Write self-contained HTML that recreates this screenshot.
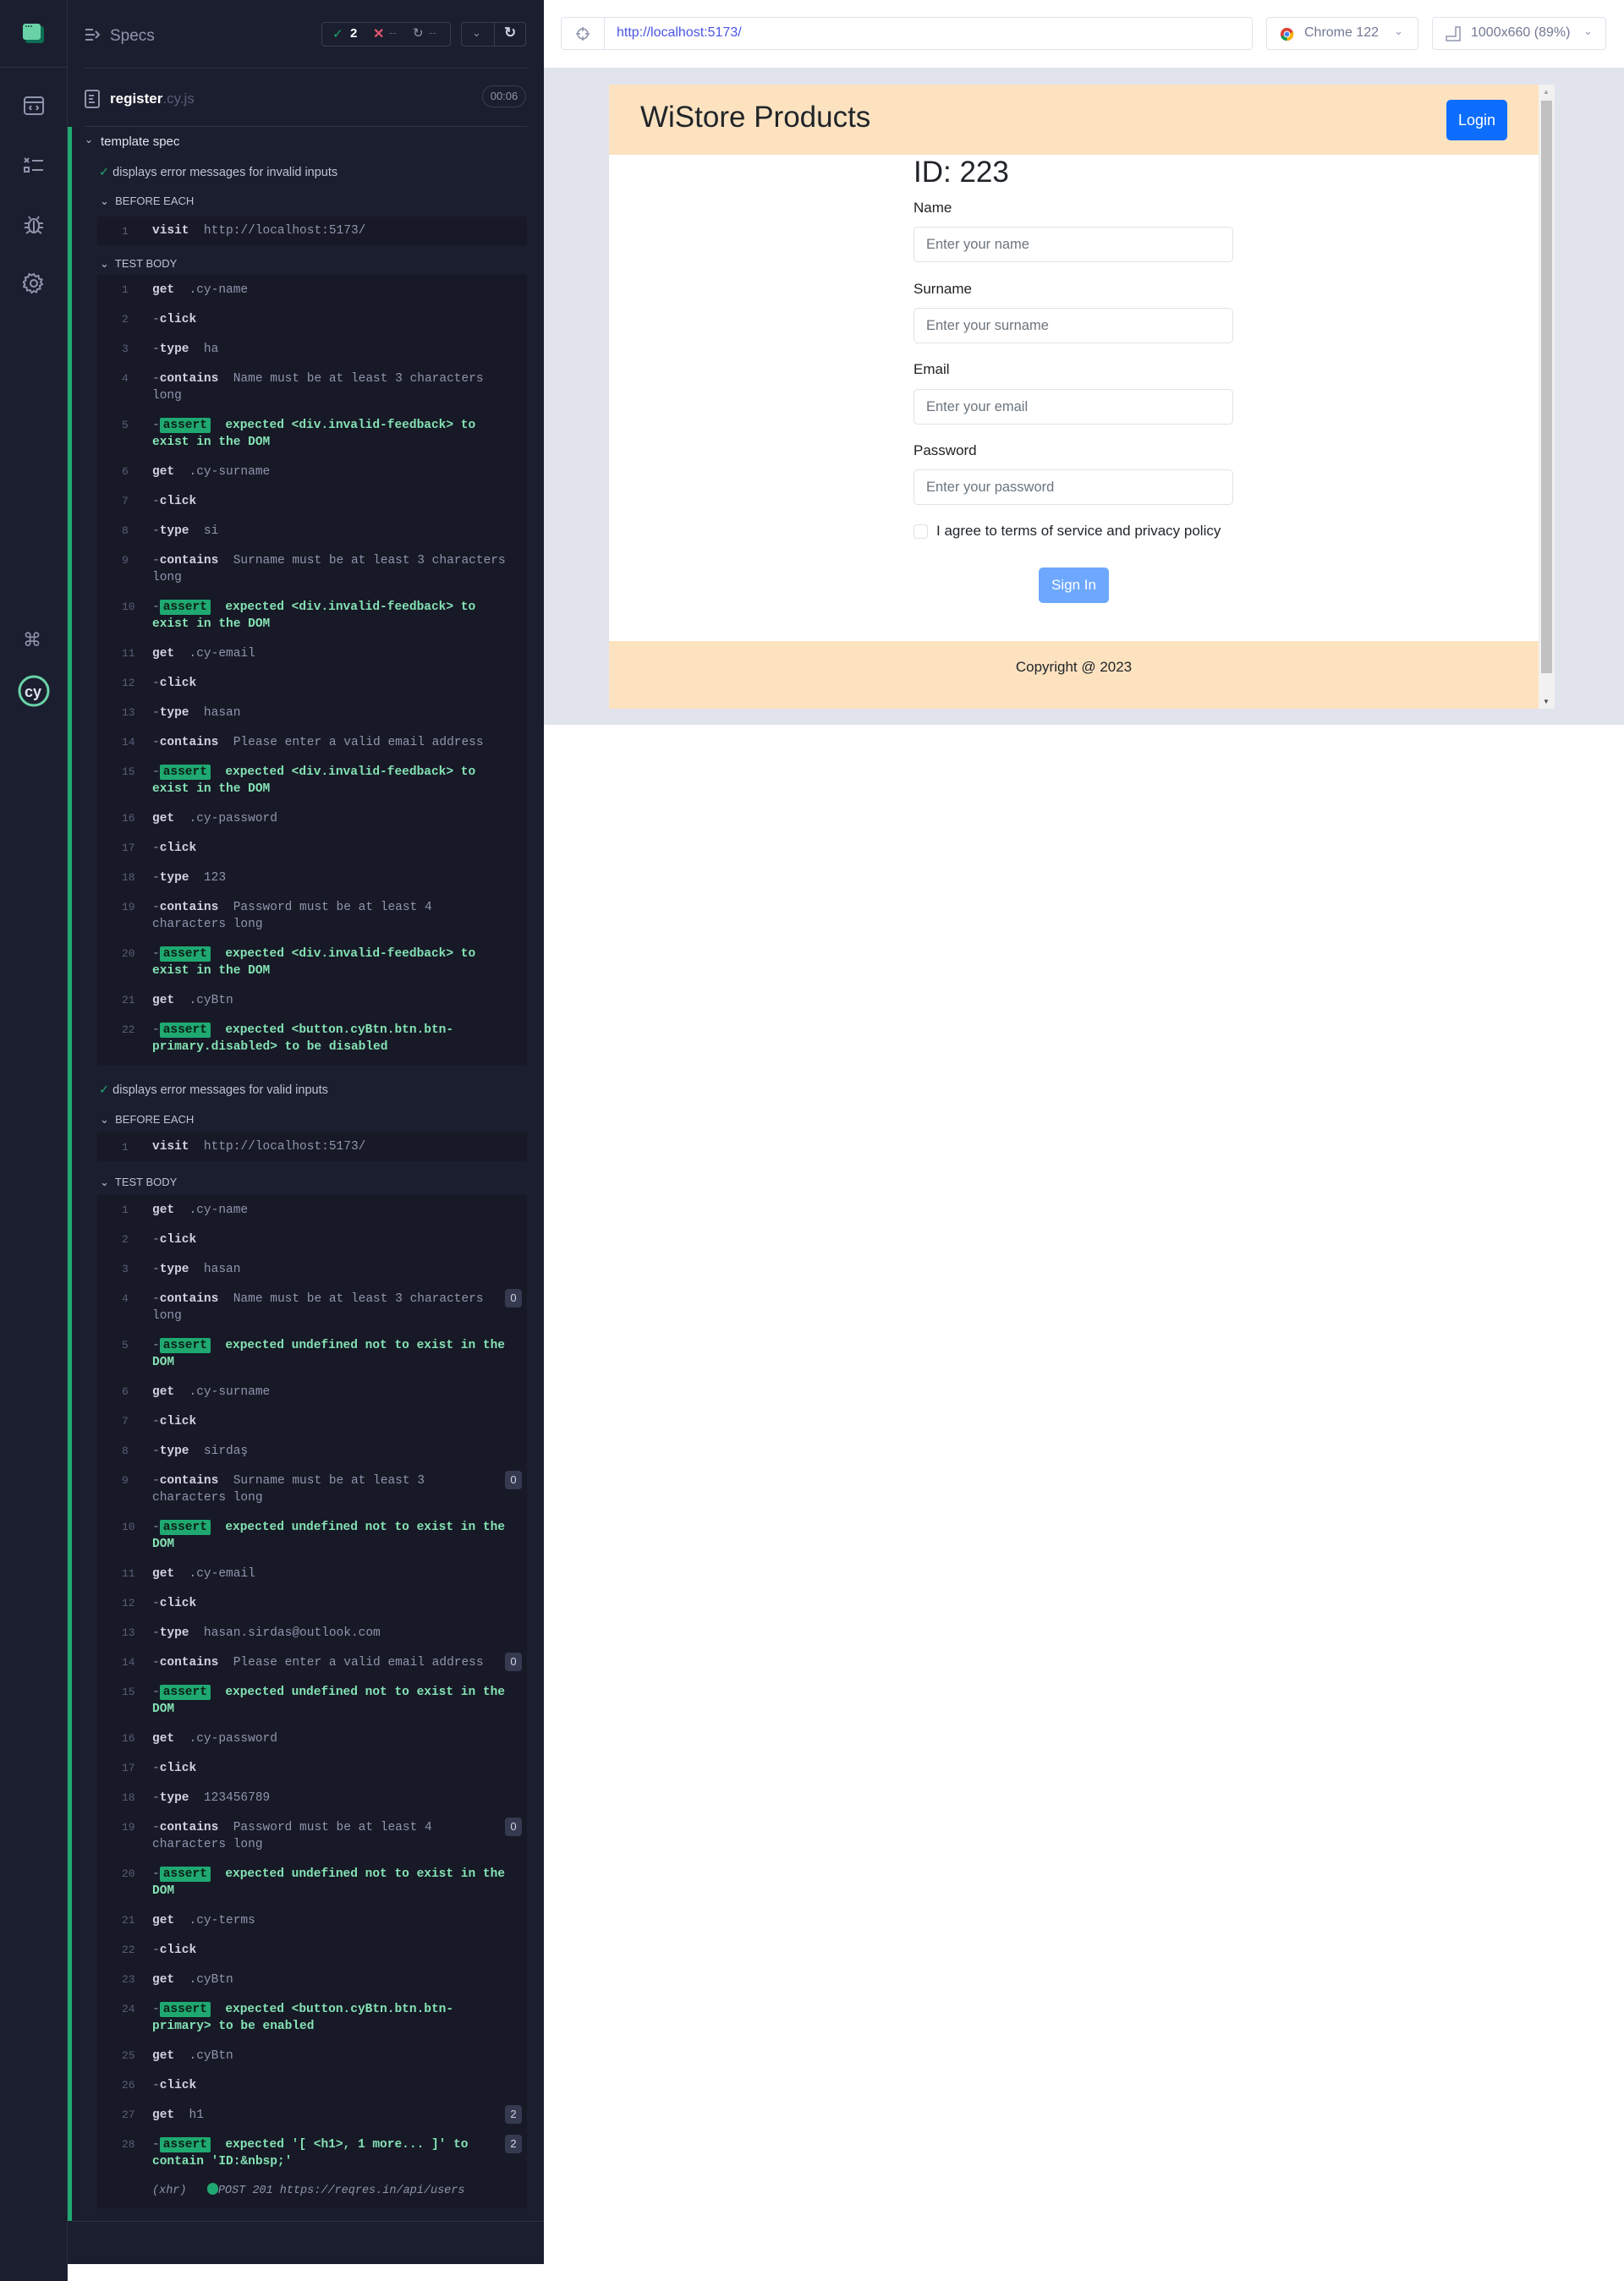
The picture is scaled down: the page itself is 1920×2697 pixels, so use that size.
<!DOCTYPE html>
<html><head><meta charset="utf-8"><style>
*{box-sizing:border-box;margin:0;padding:0}
body{width:1920px;height:2697px;background:#fff;position:relative;font-family:"Liberation Sans",sans-serif;overflow:hidden}
#side{position:absolute;left:0;top:0;width:80px;height:2697px;background:#1b1e2e;border-right:1px solid #2a2d40}
#side .sep{position:absolute;left:0;top:79px;width:80px;height:1px;background:#2e3247}
#side svg{position:absolute}
#rep{position:absolute;left:80px;top:0;width:563px;height:2677px;background:#1b1e2e}
.hline{position:absolute;left:20px;right:20px;height:1px;background:#2e3247}
#specs{position:absolute;left:50px;top:32px;color:#9095ad;font-size:19px}
.box{position:absolute;border:1px solid #3a3d52;border-radius:4px}
#green{position:absolute;left:0;top:150px;width:5px;height:2476px;background:#1fa971}
.mono{font-family:"Liberation Mono",monospace}
.title{position:absolute;color:#e1e3ed;font-size:15px}
.sec{position:absolute;color:#bfc2d4;font-size:13px}
.blk{position:absolute;left:35px;width:508px;background:#171926}
.r{position:relative;padding:8px 0 7px 65px;line-height:20px;font-family:"Liberation Mono",monospace;font-size:14.5px;color:#9095ad;white-space:nowrap}
.r .n{position:absolute;left:29px;top:8px;color:#5a5e78;font-size:13px}
.r b{color:#d0d2e0}
.r .d{color:#9095ad}
.r .a{background:#1fa971;color:#0d1f17;padding:1px 4px;border-radius:2px;font-weight:bold}
.r .g{color:#84e2b4;font-weight:bold}
.r .bd{position:absolute;right:6px;top:6px;background:#363a50;color:#d0d2e0;font-size:13px;width:20px;height:22px;text-align:center;line-height:22px;border-radius:4px;font-family:"Liberation Sans",sans-serif}
#top{position:absolute;left:643px;top:0;width:1277px;height:81px;background:#fff;border-bottom:1px solid #e1e3ed}
#vp{position:absolute;left:643px;top:81px;width:1277px;height:776px;background:#e1e3ed}
#app{position:absolute;left:720px;top:100px;width:1099px;height:738px;background:#fff}
.peach{background:#fde2c0;position:absolute;left:0;width:1099px}
.lbl{position:absolute;left:360px;font-size:17px;color:#222}
.inp{position:absolute;left:360px;width:378px;height:42px;border:1px solid #dee2e6;border-radius:5px;padding-left:14px;line-height:40px;font-size:16.5px;color:#6c757d}
</style></head><body>
<div id="side">
<svg style="left:26px;top:26px" width="28" height="28" viewBox="0 0 28 28"><rect x="4" y="5" width="22" height="20" rx="3" fill="#0e6e55"/><rect x="1" y="2" width="21" height="19" rx="3" fill="#69d3a7"/><circle cx="5" cy="5" r="0.9" fill="#1b1e2e"/><circle cx="8" cy="5" r="0.9" fill="#1b1e2e"/><circle cx="11" cy="5" r="0.9" fill="#1b1e2e"/></svg>
<div class="sep"></div>
<svg style="left:27px;top:112px" width="26" height="26" viewBox="0 0 26 26" fill="none" stroke="#9095ad" stroke-width="2"><rect x="2" y="3" width="22" height="20" rx="3"/><line x1="2" y1="9" x2="24" y2="9"/><path d="M10 13l-2 2.5 2 2.5M16 13l2 2.5-2 2.5"/></svg>
<svg style="left:27px;top:183px" width="26" height="26" viewBox="0 0 26 26" fill="none" stroke="#9095ad" stroke-width="2"><path d="M2 4l5 5M7 4l-5 5M11 7h13"/><rect x="2" y="15" width="5" height="5"/><path d="M11 18h13"/></svg>
<svg style="left:27px;top:252px" width="26" height="26" viewBox="0 0 26 26" fill="none" stroke="#9095ad" stroke-width="2"><ellipse cx="13" cy="15" rx="6" ry="8"/><path d="M9 7l-2-3M17 7l2-3M7 12H2M7 17H2M19 12h5M19 17h5M8 21l-4 3M18 21l4 3M13 9v14"/></svg>
<svg style="left:27px;top:322px" width="26" height="26" viewBox="0 0 26 26" fill="none" stroke="#9095ad" stroke-width="2"><circle cx="13" cy="13" r="4"/><path d="M13 2l2 3 3.5-1 .5 3.5 3.5 1-1.5 3 2 2.5-3 2 .5 3.5-3.5.5-1 3.5-3-1.5-2.5 2-2-3-3.5.5-.5-3.5-3.5-1 1.5-3-2-2.5 3-2-.5-3.5 3.5-.5 1-3.5 3 1.5z"/></svg>
<div style="position:absolute;left:27px;top:744px;color:#9095ad;font-size:22px">⌘</div>
<svg style="left:20px;top:797px" width="40" height="40" viewBox="0 0 40 40" fill="none"><circle cx="20" cy="20" r="17" stroke="#69d3a7" stroke-width="3"/><text x="9" y="27" font-family="Liberation Sans" font-size="18" font-weight="bold" fill="#e1e3ed">cy</text></svg>
</div>

<div id="rep">
<svg style="position:absolute;left:20px;top:32px" width="20" height="18" viewBox="0 0 20 18" fill="none" stroke="#9095ad" stroke-width="2"><path d="M1 3h9M1 9h11M1 15h9M13 5l4 4-4 4"/></svg>
<div id="specs">Specs</div>
<div class="box" style="left:300px;top:26px;width:153px;height:29px"><span style="position:absolute;left:12px;top:4px;color:#1fa971;font-size:15px">✓</span><span style="position:absolute;left:33px;top:4px;color:#fff;font-weight:bold;font-size:15px">2</span><span style="position:absolute;left:60px;top:3px;color:#e45770;font-size:16px;font-weight:bold">✕</span><span style="position:absolute;left:79px;top:4px;color:#5a5e78;font-size:13px">--</span><span style="position:absolute;left:107px;top:3px;color:#9095ad;font-size:15px">↻</span><span style="position:absolute;left:126px;top:4px;color:#5a5e78;font-size:13px">--</span></div>
<div class="box" style="left:465px;top:26px;width:77px;height:29px"><div style="position:absolute;left:38px;top:0;width:1px;height:27px;background:#3a3d52"></div><span style="position:absolute;left:12px;top:4px;color:#9095ad;font-size:13px">⌄</span><span style="position:absolute;left:50px;top:2px;color:#d0d2e0;font-size:17px;font-weight:bold">↻</span></div>
<div class="hline" style="top:80px"></div>
<svg style="position:absolute;left:20px;top:106px" width="18" height="22" viewBox="0 0 18 22" fill="none" stroke="#9095ad" stroke-width="2"><rect x="1" y="1" width="16" height="20" rx="2"/><path d="M5 7h6M5 11h5M5 15h7"/></svg>
<div style="position:absolute;left:50px;top:107px;font-size:17px;color:#fff;font-weight:bold">register<span style="color:#5a5e78;font-weight:normal">.cy.js</span></div>
<div style="position:absolute;left:490px;top:101px;width:52px;height:26px;border:1px solid #3a3d52;border-radius:13px;color:#9095ad;font-size:13px;text-align:center;line-height:24px">00:06</div>
<div class="hline" style="top:149px"></div>
<div id="green"></div>
<div class="hline" style="top:2626px;left:5px;right:0"></div>

<div class="sec" style="left:20px;top:158px;font-size:12px">⌄</div>
<div class="title" style="left:39px;top:159px">template spec</div>
<div class="title" style="left:37px;top:196px;font-size:14.5px;color:#bfc2d4"><span style="color:#1fa971">✓</span> displays error messages for invalid inputs</div>
<div class="sec" style="left:38px;top:230px">⌄&nbsp; BEFORE EACH</div>
<div class="blk" style="top:256px;height:34px"><div class="r" style="padding-top:7px"><span class="n">1</span><b>visit</b>&nbsp; http://localhost:5173/</div></div>
<div class="sec" style="left:38px;top:304px">⌄&nbsp; TEST BODY</div>
<div class="blk" style="top:325px;padding-bottom:5px">
<div class="r"><span class="n">1</span><b>get</b>&nbsp; .cy-name</div>
<div class="r"><span class="n">2</span><span class="d">-</span><b>click</b></div>
<div class="r"><span class="n">3</span><span class="d">-</span><b>type</b>&nbsp; ha</div>
<div class="r"><span class="n">4</span><span class="d">-</span><b>contains</b>&nbsp; Name must be at least 3 characters<br>long</div>
<div class="r"><span class="n">5</span><span class="d">-</span><span class="a">assert</span>&nbsp; <span class="g">expected &lt;div.invalid-feedback&gt; to<br>exist in the DOM</span></div>
<div class="r"><span class="n">6</span><b>get</b>&nbsp; .cy-surname</div>
<div class="r"><span class="n">7</span><span class="d">-</span><b>click</b></div>
<div class="r"><span class="n">8</span><span class="d">-</span><b>type</b>&nbsp; si</div>
<div class="r"><span class="n">9</span><span class="d">-</span><b>contains</b>&nbsp; Surname must be at least 3 characters<br>long</div>
<div class="r"><span class="n">10</span><span class="d">-</span><span class="a">assert</span>&nbsp; <span class="g">expected &lt;div.invalid-feedback&gt; to<br>exist in the DOM</span></div>
<div class="r"><span class="n">11</span><b>get</b>&nbsp; .cy-email</div>
<div class="r"><span class="n">12</span><span class="d">-</span><b>click</b></div>
<div class="r"><span class="n">13</span><span class="d">-</span><b>type</b>&nbsp; hasan</div>
<div class="r"><span class="n">14</span><span class="d">-</span><b>contains</b>&nbsp; Please enter a valid email address</div>
<div class="r"><span class="n">15</span><span class="d">-</span><span class="a">assert</span>&nbsp; <span class="g">expected &lt;div.invalid-feedback&gt; to<br>exist in the DOM</span></div>
<div class="r"><span class="n">16</span><b>get</b>&nbsp; .cy-password</div>
<div class="r"><span class="n">17</span><span class="d">-</span><b>click</b></div>
<div class="r"><span class="n">18</span><span class="d">-</span><b>type</b>&nbsp; 123</div>
<div class="r"><span class="n">19</span><span class="d">-</span><b>contains</b>&nbsp; Password must be at least 4<br>characters long</div>
<div class="r"><span class="n">20</span><span class="d">-</span><span class="a">assert</span>&nbsp; <span class="g">expected &lt;div.invalid-feedback&gt; to<br>exist in the DOM</span></div>
<div class="r"><span class="n">21</span><b>get</b>&nbsp; .cyBtn</div>
<div class="r"><span class="n">22</span><span class="d">-</span><span class="a">assert</span>&nbsp; <span class="g">expected &lt;button.cyBtn.btn.btn-<br>primary.disabled&gt; to be disabled</span></div>
</div>

<div class="title" style="left:37px;top:1281px;font-size:14.5px;color:#bfc2d4"><span style="color:#1fa971">✓</span> displays error messages for valid inputs</div>
<div class="sec" style="left:38px;top:1316px">⌄&nbsp; BEFORE EACH</div>
<div class="blk" style="top:1339px;height:34px"><div class="r" style="padding-top:7px"><span class="n">1</span><b>visit</b>&nbsp; http://localhost:5173/</div></div>
<div class="sec" style="left:38px;top:1390px">⌄&nbsp; TEST BODY</div>
<div class="blk" style="top:1413px;height:1198px">
<div class="r"><span class="n">1</span><b>get</b>&nbsp; .cy-name</div>
<div class="r"><span class="n">2</span><span class="d">-</span><b>click</b></div>
<div class="r"><span class="n">3</span><span class="d">-</span><b>type</b>&nbsp; hasan</div>
<div class="r"><span class="n">4</span><span class="d">-</span><b>contains</b>&nbsp; Name must be at least 3 characters<br>long<span class="bd">0</span></div>
<div class="r"><span class="n">5</span><span class="d">-</span><span class="a">assert</span>&nbsp; <span class="g">expected undefined not to exist in the<br>DOM</span></div>
<div class="r"><span class="n">6</span><b>get</b>&nbsp; .cy-surname</div>
<div class="r"><span class="n">7</span><span class="d">-</span><b>click</b></div>
<div class="r"><span class="n">8</span><span class="d">-</span><b>type</b>&nbsp; sirdaş</div>
<div class="r"><span class="n">9</span><span class="d">-</span><b>contains</b>&nbsp; Surname must be at least 3<br>characters long<span class="bd">0</span></div>
<div class="r"><span class="n">10</span><span class="d">-</span><span class="a">assert</span>&nbsp; <span class="g">expected undefined not to exist in the<br>DOM</span></div>
<div class="r"><span class="n">11</span><b>get</b>&nbsp; .cy-email</div>
<div class="r"><span class="n">12</span><span class="d">-</span><b>click</b></div>
<div class="r"><span class="n">13</span><span class="d">-</span><b>type</b>&nbsp; hasan.sirdas@outlook.com</div>
<div class="r"><span class="n">14</span><span class="d">-</span><b>contains</b>&nbsp; Please enter a valid email address<span class="bd">0</span></div>
<div class="r"><span class="n">15</span><span class="d">-</span><span class="a">assert</span>&nbsp; <span class="g">expected undefined not to exist in the<br>DOM</span></div>
<div class="r"><span class="n">16</span><b>get</b>&nbsp; .cy-password</div>
<div class="r"><span class="n">17</span><span class="d">-</span><b>click</b></div>
<div class="r"><span class="n">18</span><span class="d">-</span><b>type</b>&nbsp; 123456789</div>
<div class="r"><span class="n">19</span><span class="d">-</span><b>contains</b>&nbsp; Password must be at least 4<br>characters long<span class="bd">0</span></div>
<div class="r"><span class="n">20</span><span class="d">-</span><span class="a">assert</span>&nbsp; <span class="g">expected undefined not to exist in the<br>DOM</span></div>
<div class="r"><span class="n">21</span><b>get</b>&nbsp; .cy-terms</div>
<div class="r"><span class="n">22</span><span class="d">-</span><b>click</b></div>
<div class="r"><span class="n">23</span><b>get</b>&nbsp; .cyBtn</div>
<div class="r"><span class="n">24</span><span class="d">-</span><span class="a">assert</span>&nbsp; <span class="g">expected &lt;button.cyBtn.btn.btn-<br>primary&gt; to be enabled</span></div>
<div class="r"><span class="n">25</span><b>get</b>&nbsp; .cyBtn</div>
<div class="r"><span class="n">26</span><span class="d">-</span><b>click</b></div>
<div class="r"><span class="n">27</span><b>get</b>&nbsp; h1<span class="bd">2</span></div>
<div class="r"><span class="n">28</span><span class="d">-</span><span class="a">assert</span>&nbsp; <span class="g">expected '[ &lt;h1&gt;, 1 more... ]' to<br>contain 'ID:&amp;nbsp;'</span><span class="bd">2</span></div>
<div class="r" style="font-style:italic;font-size:13.5px;padding-left:65px"><span style="color:#9095ad">(xhr)</span>&nbsp;&nbsp; <span style="display:inline-block;width:13px;height:14px;border-radius:7px;background:#1fa971;vertical-align:-2px"></span><span style="color:#9095ad">POST 201 https://reqres.in/api/users</span></div>
</div>
</div>

<div id="top">
<div style="position:absolute;left:20px;top:20px;width:818px;height:39px;border:1px solid #e1e3ed;border-radius:4px">
<div style="position:absolute;left:50px;top:0;width:1px;height:37px;background:#e1e3ed"></div>
<svg style="position:absolute;left:16px;top:10px" width="18" height="18" viewBox="0 0 18 18" fill="none" stroke="#9095ad" stroke-width="1.6"><circle cx="9" cy="9" r="6"/><path d="M9 1v5M9 12v5M1 9h5M12 9h5"/></svg>
<span style="position:absolute;left:65px;top:9px;color:#4956e3;font-size:16px">http://localhost:5173/</span></div>
<div style="position:absolute;left:854px;top:20px;width:180px;height:39px;border:1px solid #e1e3ed;border-radius:4px">
<svg style="position:absolute;left:15px;top:11px" width="17" height="17" viewBox="0 0 20 20"><circle cx="10" cy="10" r="9" fill="#db4437"/><path d="M10 10L1.5 13.5A9 9 0 0 0 10 19z" fill="#0f9d58"/><path d="M10 10l8.5 -3A9 9 0 0 1 10 19z" fill="#f4b400"/><circle cx="10" cy="10" r="4.5" fill="#fff"/><circle cx="10" cy="10" r="3.4" fill="#4285f4"/></svg>
<span style="position:absolute;left:44px;top:9px;color:#747994;font-size:16px">Chrome 122</span><span style="position:absolute;left:150px;top:8px;color:#9095ad;font-size:13px">⌄</span></div>
<div style="position:absolute;left:1050px;top:20px;width:206px;height:39px;border:1px solid #e1e3ed;border-radius:4px">
<svg style="position:absolute;left:15px;top:10px" width="18" height="18" viewBox="0 0 18 18" fill="none" stroke="#9095ad" stroke-width="1.5"><path d="M1 17h16V1h-5v11H1z"/></svg>
<span style="position:absolute;left:45px;top:9px;color:#747994;font-size:16px">1000x660 (89%)</span><span style="position:absolute;left:178px;top:8px;color:#9095ad;font-size:13px">⌄</span></div>
</div>
<div id="vp"></div>
<div id="app">
<div class="peach" style="top:0;height:83px"><div style="position:absolute;left:37px;top:19px;font-size:35px;color:#212529">WiStore Products</div><div style="position:absolute;left:990px;top:18px;width:72px;height:48px;background:#0d6efd;border-radius:5px;color:#fff;font-size:18px;text-align:center;line-height:48px">Login</div></div>
<div style="position:absolute;left:360px;top:84px;font-size:35px;color:#212529">ID: 223</div>
<div class="lbl" style="top:136px">Name</div><div class="inp" style="top:168px">Enter your name</div>
<div class="lbl" style="top:232px">Surname</div><div class="inp" style="top:264px">Enter your surname</div>
<div class="lbl" style="top:327px">Email</div><div class="inp" style="top:360px">Enter your email</div>
<div class="lbl" style="top:423px">Password</div><div class="inp" style="top:455px">Enter your password</div>
<div style="position:absolute;left:360px;top:520px;width:17px;height:17px;border:1px solid #dee2e6;border-radius:4px"></div>
<div style="position:absolute;left:387px;top:518px;font-size:17px;color:#212529">I agree to terms of service and privacy policy</div>
<div style="position:absolute;left:508px;top:571px;width:83px;height:42px;background:#6ea8fe;border-radius:5px;color:#fff;font-size:17px;text-align:center;line-height:42px">Sign In</div>
<div class="peach" style="top:658px;height:80px"><div style="text-align:center;padding-top:21px;font-size:17px;color:#212529">Copyright @ 2023</div></div>
</div>
<div style="position:absolute;left:1819px;top:100px;width:19px;height:738px;background:#f1f1f1"><div style="position:absolute;left:3px;top:19px;width:13px;height:677px;background:#c1c1c1"></div><div style="position:absolute;left:5px;top:4px;font-size:8px;color:#a0a0a0">▲</div><div style="position:absolute;left:5px;bottom:4px;font-size:8px;color:#505050">▼</div></div>
</body></html>
